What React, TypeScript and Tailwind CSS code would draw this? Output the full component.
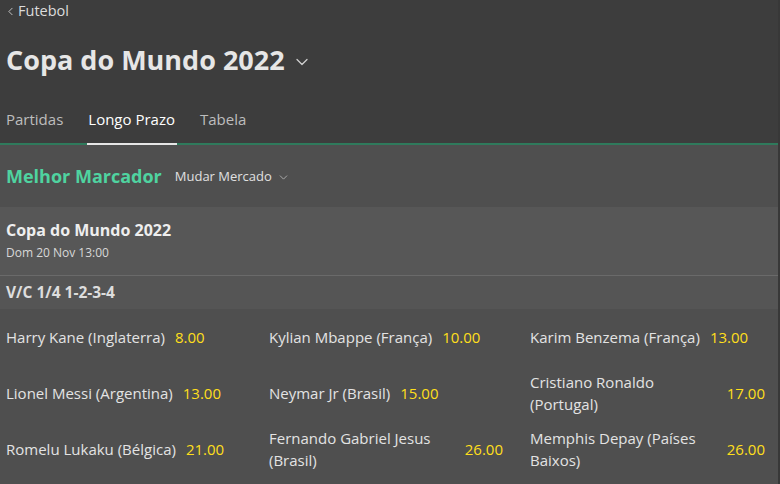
import { ChevronDown, ChevronLeft } from "lucide-react";

const rows = [
  [
    { name: "Harry Kane (Inglaterra)", odds: "8.00" },
    { name: "Kylian Mbappe (França)", odds: "10.00" },
    { name: "Karim Benzema (França)", odds: "13.00" },
  ],
  [
    { name: "Lionel Messi (Argentina)", odds: "13.00" },
    { name: "Neymar Jr (Brasil)", odds: "15.00" },
    { name: "Cristiano Ronaldo (Portugal)", odds: "17.00" },
  ],
  [
    { name: "Romelu Lukaku (Bélgica)", odds: "21.00" },
    { name: "Fernando Gabriel Jesus (Brasil)", odds: "26.00" },
    { name: "Memphis Depay (Países Baixos)", odds: "26.00" },
  ],
];

// right padding differs per column
const colPad = ["pr-[14px]", "pr-[21px]", "pr-[13px]"];

export default function App() {
  return (
    <div
      className="w-[780px] h-[484px] overflow-hidden bg-[#4f4f4f] text-[#e3e3e3] border-r-2 border-[#383838]"
      style={{ fontFamily: "'Open Sans', 'Noto Sans', sans-serif" }}
    >
      {/* header */}
      <div className="bg-[#3d3d3d]">
        <div className="flex items-center h-[22px] pl-[4px] text-[14.5px] text-[#dcdcdc]">
          <ChevronLeft size={13} strokeWidth={1.5} />
          <span className="ml-[1px]">Futebol</span>
        </div>
        <div className="flex items-center h-[76px] pl-[6px]">
          <h1 className="text-[27px] font-bold text-[#e6e6e6]">Copa do Mundo 2022</h1>
          <ChevronDown size={20} strokeWidth={1.5} className="ml-[7px] mt-[4px] text-[#cfcfcf]" />
        </div>
        <div className="flex items-end h-[47px] pl-[6px] text-[15px] border-b-2 border-[#2f7a5c]">
          <div className="pb-[13px] mr-[25px] text-[#bdbdbd]">Partidas</div>
          <div className="relative pb-[13px] mr-[25px] text-white">
            Longo Prazo
            <div className="absolute -left-[1px] -right-[2px] -bottom-[2px] h-[2px] bg-[#e6e6e6]" />
          </div>
          <div className="pb-[13px] text-[#bdbdbd]">Tabela</div>
        </div>
      </div>

      {/* market title */}
      <div className="flex items-center h-[62px] pl-[6px]">
        <span className="text-[18px] font-bold text-[#4fd3a0]">Melhor Marcador</span>
        <span className="ml-[13px] mt-[2px] text-[13px] text-[#e0e0e0]">Mudar Mercado</span>
        <ChevronDown size={13} strokeWidth={1.5} className="ml-[5px] mt-[2px] text-[#bdbdbd]" />
      </div>

      {/* event */}
      <div className="bg-[#575757] h-[69px] pl-[6px] pt-[13px] border-b border-[#6a6a6a]">
        <div className="text-[16px] font-bold text-[#eeeeee] leading-[20px]">Copa do Mundo 2022</div>
        <div className="mt-[5px] text-[12px] text-[#d8d8d8] leading-[16px]">Dom 20 Nov 13:00</div>
      </div>

      <div className="bg-[#555555] h-[33px] flex items-center pl-[6px] text-[15.5px] font-bold text-[#dddddd]">
        V/C 1/4 1-2-3-4
      </div>

      <div>
        {rows.map((row, i) => (
          <div key={i} className="grid grid-cols-[263px_261px_1fr] h-[56px]">
            {row.map((s, j) => (
              <div
                key={s.name}
                className={`flex items-center pl-[6px] ${colPad[j]} text-[15px] leading-[22px]`}
              >
                <span className="min-w-0">{s.name}</span>
                <span className="shrink-0 ml-[10px] text-[#ffdf1b]">{s.odds}</span>
              </div>
            ))}
          </div>
        ))}
      </div>
    </div>
  );
}
